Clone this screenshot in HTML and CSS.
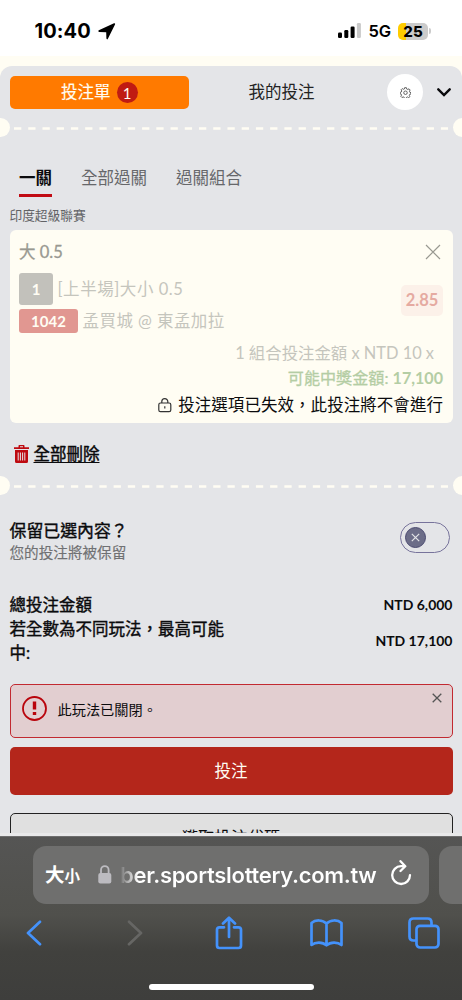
FILE: index.html
```html
<!DOCTYPE html>
<html lang="zh-Hant">
<head>
<meta charset="utf-8">
<title>投注單</title>
<meta name="viewport" content="width=device-width">
<link rel="stylesheet" href="styles.css">
</head>
<body>
<div class="phone">
  <header class="status">
    <span class="time">10:40</span>
    <svg class="loc" width="18" height="17" viewBox="0 0 18 17"><path d="M.8 7.200 16 .2q1.500-.3 1 1.200L9.900 15.800q-.9 1.300-1.500-.2L8.200 9.200 1.100 9q-1.500-.7-.3-1.800z"/></svg>
    <span class="fill"></span>
    <svg class="signal" width="24" height="16" viewBox="0 0 24 16"><rect x="0" y="9.500" width="4" height="5.500" rx="1.200"/><rect x="6.300" y="7" width="4" height="8" rx="1.200"/><rect x="12.600" y="3.500" width="4" height="11.500" rx="1.200"/><rect class="dim" x="18.900" y="0" width="4" height="15" rx="1.200"/></svg>
    <span class="net">5G</span>
    <span class="battery">25</span><i class="nub"></i>
  </header>

  <main class="sheet">
    <div class="top">
      <button class="slip">投注單<b class="count">1</b></button>
      <span class="mine">我的投注</span>
      <span class="gear"><svg width="11" height="11" viewBox="0 0 24 24"><path d="M10 1.500h4l.7 3 2.300 1 2.700-1.600 2.400 2.700-1.500 2.600.9 2.400 2.500.6v3l-2.800.8-1 2.200 1.500 2.600-2.600 2.500-2.600-1.600-2.200.9-.8 2.400h-3.600l-.8-2.600-2.200-.9-2.600 1.500-2.500-2.600L3.400 17.800l-.9-2.200-2-.6v-3.400l2.400-.7 1-2.300L2.400 6l2.500-2.500 2.600 1.600 2-.8z"/><circle cx="12" cy="12.500" r="3.800"/></svg></span>
      <svg class="chev" width="14" height="9" viewBox="0 0 14 9"><path d="M1.300 1.300 7 7l5.700-5.700"/></svg>
    </div>
    <div class="tear"><i></i><svg width="434" height="3"><path d="M0 1.500H434"/></svg><i></i></div>

    <nav class="tabs"><span class="on">一關</span><span>全部過關</span><span>過關組合</span></nav>
    <div class="league">印度超級聯賽</div>

    <section class="card">
      <div class="pick"><strong>大 0.5</strong><svg width="16" height="16" viewBox="0 0 16 16"><path d="M1 1l14 14M15 1 1 15"/></svg></div>
      <div class="match">
        <div class="info">
          <div class="line"><b class="num">1</b><span>[上半場]大小 0.5</span></div>
          <div class="line second"><b class="code">1042</b><span>孟買城 @ 東孟加拉</span></div>
        </div>
        <b class="odds">2.85</b>
      </div>
      <div class="stake">1 組合投注金額 x NTD 10 x</div>
      <div class="win">可能中獎金額: <b>17,100</b></div>
      <div class="invalid"><svg width="14" height="15" viewBox="0 0 14 15"><rect x=".8" y="5" width="12" height="8.700" rx="1.700"/><path d="M3.800 5V3.600a3 2.900 0 0 1 6 0V5M6.800 8.300v2.200"/></svg>投注選項已失效，此投注將不會進行</div>
    </section>

    <div class="clear"><svg width="15" height="18" viewBox="0 0 15 18"><path class="solid" d="M0 2.200h4.500V.8q0-.8.8-.8h4.400q.8 0 .8.800v1.400H15v1.900H0zM6 1.300v.9h3v-.9zM1 5h13v11.500q0 1.500-1.500 1.500h-10Q1 18 1 16.500z"/><path class="slot" d="M4.200 7.500v8M6.400 7.500v8M8.600 7.500v8M10.800 7.500v8"/></svg><a>全部刪除</a></div>
    <div class="tear"><i></i><svg width="434" height="3"><path d="M0 1.500H434"/></svg><i></i></div>

    <div class="keep">
      <div><div class="q">保留已選內容？</div><div class="hint">您的投注將被保留</div></div>
      <span class="switch"><span class="knob"><svg width="9" height="9" viewBox="0 0 9 9"><path d="M.8.8l7.400 7.400M8.200.8.8 8.200"/></svg></span></span>
    </div>
    <div class="sum"><span>總投注金額</span><b>NTD 6,000</b></div>
    <div class="sum"><span>若全數為不同玩法，最高可能中:</span><b>NTD 17,100</b></div>

    <div class="alert">
      <svg class="warn" width="25" height="25" viewBox="0 0 25 25"><circle cx="12.500" cy="12.500" r="11.500"/><path d="M12.500 5.500v8M12.500 16v3"/></svg>
      <span>此玩法已關閉。</span>
      <svg class="x" width="10" height="10" viewBox="0 0 10 10"><path d="M.7.7l8.600 8.600M9.300.7.7 9.300"/></svg>
    </div>
    <button class="bet">投注</button>
    <button class="getcode">獲取投注代碼</button>
  </main>

  <footer class="browser">
    <div class="bars">
      <div class="url">
        <span class="aa">大<small>小</small></span>
        <svg class="lock" width="14" height="19" viewBox="0 0 14 19"><rect x=".3" y="8" width="13" height="10.500" rx="2"/><path d="M3 8.500V5a3.700 3.800 0 0 1 7.600 0v3.500"/></svg>
        <span class="host">ber.sportslottery.com.tw</span>
        <svg class="reload" width="22" height="26" viewBox="0 0 22 26"><path d="M14.500 6.200H11a8.900 8.900 0 1 0 9 8.900M10.500 1.200l4.800 5-4.800 4.800"/></svg>
      </div>
      <div class="next"></div>
    </div>
    <div class="tools">
      <svg width="16" height="26" viewBox="0 0 16 26"><path d="M14 1.800 2 13l12 11.200"/></svg>
      <svg class="off" width="16" height="26" viewBox="0 0 16 26"><path d="M2 1.800 14 13 2 24.200"/></svg>
      <svg width="28" height="34" viewBox="0 0 28 34"><path d="M9 11.300H4.500Q2 11.300 2 13.800v15.700Q2 32 4.500 32h19q2.500 0 2.500-2.500V13.800q0-2.500-2.500-2.500H19M14 21V2M8 7.500l6-5.800 6 5.800"/></svg>
      <svg width="33" height="28" viewBox="0 0 33 28"><path d="M16.500 4.500C12.500.7 5.500.4 1.500 4v22c4-3.300 11-3.300 15 .3 4-3.600 11-3.600 15-.3V4c-4-3.600-11-3.300-15 .5zv21.800"/></svg>
      <svg width="32" height="32" viewBox="0 0 32 32"><path d="M8 23.500H5.500q-4 0-4-4v-14q0-4 4-4h14q4 0 4 4V8"/><rect x="8.500" y="8.800" width="22" height="21.700" rx="3.500"/></svg>
    </div>
    <div class="home"></div>
  </footer>
</div>
</body>
</html>
```
FILE: styles.css
```css
* { box-sizing: border-box; }
body { margin: 0; background: #fffdf3; color: #0b0b0d; font: 16.5px/24px Lato, "Noto Sans CJK TC", sans-serif; }
svg { display: block; flex: none; fill: none; }
button { font: inherit; color: inherit; border: 0; padding: 0; }
.phone { width: 462px; height: 1000px; overflow: hidden; display: flex; flex-direction: column; }

.status { height: 56px; flex: none; background: #fff; display: flex; align-items: center; padding: 6px 31px 0 34.500px; font-family: Inter, sans-serif; font-weight: 600; color: #000; }
.time { font-size: 20px; font-weight: 700; letter-spacing: .1px; width: 63px; white-space: nowrap; }
.loc { fill: #000; }
.fill { flex: 1; }
.signal { fill: #000; margin-right: 7px; }
.signal .dim { fill: #c9c9c9; }
.net { font-size: 16.5px; width: 29.500px; letter-spacing: -.2px; }
.battery { width: 30px; height: 17px; border-radius: 5px; background: linear-gradient(90deg, #ffcc00 8px, #cbcbcb 8px); font: 800 15px/17px Inter, sans-serif; text-align: center; }
.nub { width: 2px; height: 6px; margin-left: 1px; border-radius: 0 2px 2px 0; background: #cbcbcb; }

.sheet { height: 770px; margin-top: 10px; flex: none; overflow: hidden; background: #e4e5e8; border-radius: 12px 12px 0 0; border-bottom: 3px solid #e9e9ea; padding: 9px 9.5px 0; }
.top { height: 34px; display: flex; align-items: center; }
.slip { width: 179.5px; height: 33px; border-radius: 5px; background: #ff7a00; color: #fffdf3; -webkit-text-stroke: .15px; display: flex; align-items: center; justify-content: center; gap: 6px; }
.count { width: 21px; height: 21px; border-radius: 50%; background: #c01b12; font-size: 15px; line-height: 22px; font-weight: 400; -webkit-text-stroke: 0; }
.mine { margin-left: 59.5px; width: 138.500px; color: #222; }
.gear { width: 36px; height: 36px; border-radius: 50%; background: #fff; display: flex; align-items: center; justify-content: center; flex: none; }
.gear svg { stroke: #555; stroke-width: 2; }
.chev { stroke: #0b0b0d; stroke-width: 2.400; stroke-linecap: round; margin-left: 13.500px; margin-top: 1px; }
.tear { height: 19px; margin: 8.500px -19px 0; display: flex; align-items: center; gap: 4.700px; }
.tear i { width: 19px; height: 19px; flex: none; border-radius: 50%; background: #fffdf3; }
.tear svg { margin-top: 2px; stroke: #fffdf3; stroke-width: 2.600; stroke-dasharray: 7.300 6.930; }

.tabs { margin: 26px 0 0 9.500px; height: 34.500px; display: flex; gap: 29px; color: #66676a; line-height: 30px; }
.tabs .on { color: #0b0b0d; font-weight: 700; border-bottom: 3.500px solid #c10b14; }
.league { margin-top: 8px; height: 25px; font-size: 12.700px; line-height: 21px; color: #626366; }

.card { height: 192.500px; border-radius: 6px; background: #fffdf3; padding: 9px 9.500px 0; }
.pick { display: flex; justify-content: space-between; height: 34px; color: #999991; }
.pick strong { font-size: 16.500px; line-height: 26px; font-weight: 400; -webkit-text-stroke: .3px; }
.pick svg { stroke: #999991; stroke-width: 1.200; margin: 5px 2px 0 0; }
.match { display: flex; justify-content: space-between; color: #c5c5bd; }
.line { display: flex; align-items: center; gap: 4.500px; letter-spacing: .55px; height: 32px; }
.second { height: 24px; margin-top: 4px; letter-spacing: .45px; }
.num, .code { color: #fffdf3; text-align: center; border-radius: 3px; font-size: 15px; letter-spacing: 0; }
.num { width: 34px; height: 32px; line-height: 33px; background: #c2c1bb; }
.code { width: 59px; height: 24px; line-height: 25px; background: #e19791; }
.odds { margin-top: 12px; width: 42px; height: 31px; border-radius: 5px; background: #fcf1e9; color: #e5aaa1; text-align: center; line-height: 31px; font-size: 16.500px; }
.stake { margin-top: 8px; padding-right: 9px; text-align: right; color: #c5c5bd; font-size: 16.400px; }
.win { margin-top: 1px; text-align: right; -webkit-text-stroke: .3px; color: #b4cda4; font-size: 16.100px; }
.win b { -webkit-text-stroke: 0; }
.invalid { margin-top: 3px; display: flex; justify-content: flex-end; align-items: center; gap: 6px; letter-spacing: .05px; }
.invalid svg { stroke: #333; stroke-width: 1.200; }

.clear { margin-top: 19px; padding-left: 4.500px; display: flex; align-items: center; gap: 4.500px; height: 24px; -webkit-text-stroke: .45px; }
.clear a { text-decoration: underline; text-decoration-thickness: 1.300px; text-underline-offset: 2px; }
.clear .solid { fill: #be0a10; }
.clear .slot { stroke: #e4e5e8; stroke-width: 1; }
.clear + .tear { margin-top: 10.500px; }

.keep { margin-top: 22px; height: 48px; display: flex; justify-content: space-between; }
.q { font-size: 16.900px; line-height: 25px; margin-top: 1px; -webkit-text-stroke: .4px; }
.hint { font-size: 14.600px; line-height: 20px; color: #707173; -webkit-text-stroke: .15px; }
.switch { width: 50px; height: 31px; margin: 5px 2.500px 0 0; border: 1.200px solid #77739b; border-radius: 16px; display: flex; align-items: center; padding-left: 4px; }
.knob { width: 21px; height: 21px; border-radius: 50%; background: #6c6d88; border: 1.500px solid #4b4a70; display: flex; align-items: center; justify-content: center; }
.knob svg { stroke: #e4e5e8; stroke-width: 1.200; }
.sum { display: flex; justify-content: space-between; align-items: center; }
.sum span { width: 218px; -webkit-text-stroke: .4px; }
.sum b { font-size: 14px; }
.keep + .sum { margin-top: 28px; }

.alert { margin-top: 18.500px; height: 54.500px; border: 1.500px solid #c22a31; border-radius: 5px; background: #e2ced0; display: flex; align-items: center; padding-left: 11px; font-size: 14.200px; }
.alert span { margin-top: -1px; }
.warn { stroke: #b9040c; stroke-width: 1.800; margin: -5px 11px 0 0; }
.warn path { stroke-width: 3.400; }
.alert .x { stroke: #555; stroke-width: 1.300; margin: -25px 10px 0 auto; }
.bet, .getcode { display: block; width: 100%; height: 47.500px; border-radius: 5px; }
.bet { margin-top: 9px; background: #b4261b; color: #fffdf3; }
.getcode { margin-top: 18.500px; border: 1.500px solid #222; background: #e0e0e0; padding-top: 2px; }

.browser { flex: 1; background: linear-gradient(#555554, #50504c 48%, #41413e 70%, #3e3e3c); border-top: 1px solid #6e6e6e; padding-top: 9px; }
.bars { display: flex; gap: 10px; }
.url { width: 395.500px; height: 58px; flex: none; margin-left: 33px; border-radius: 13px; background: #6f6f6e; display: flex; align-items: center; padding-left: 12px; color: #fff; }
.aa { font-weight: 700; font-size: 19.500px; width: 53px; white-space: nowrap; }
.aa small { font-size: 15.500px; }
.lock { fill: #bcbbc0; margin-top: -2px; }
.lock path { fill: none; stroke: #bcbbc0; stroke-width: 1.800; }
.host { font: 600 22px/30px Inter, sans-serif; margin-left: 8px; width: 270px; white-space: nowrap; letter-spacing: -.3px; background: linear-gradient(90deg, #737373, #fff 18px); background-clip: text; -webkit-background-clip: text; color: transparent; }
.reload { stroke: #fff; stroke-width: 2.300; stroke-linecap: round; stroke-linejoin: round; margin-top: -4px; }
.next { width: 40px; height: 58px; border-radius: 13px 0 0 13px; background: #6f6f6e; }
.tools { width: 487px; height: 58px; margin-left: -14.500px; display: grid; grid-template-columns: repeat(5, 1fr); place-items: center; }
.tools svg { stroke: #4492fb; stroke-width: 2.700; stroke-linejoin: round; stroke-linecap: round; }
.tools .off { stroke: #666664; margin-left: 6px; }
.home { width: 165px; height: 6px; margin: 22px auto 0 149px; border-radius: 3px; background: #fff; }
```
